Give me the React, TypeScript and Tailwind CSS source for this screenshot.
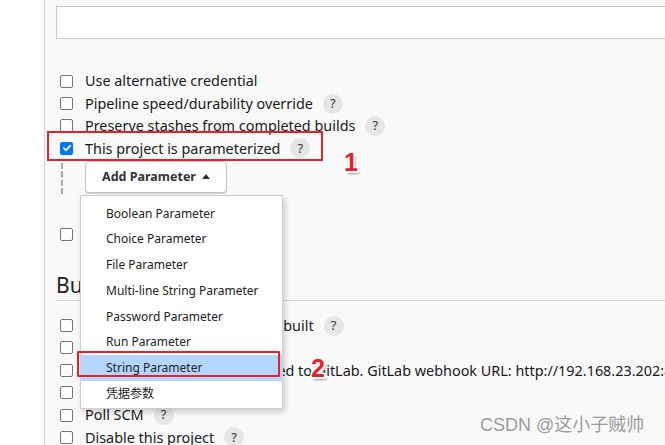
import React from "react";

const font = "font-['Segoe_UI','Noto_Sans',sans-serif]";

function Box({ checked }: { checked?: boolean }) {
  if (checked) {
    return (
      <span className="flex h-[13px] w-[13px] shrink-0 items-center justify-center rounded-[2px] bg-[#0075ff]">
        <svg width="10" height="10" viewBox="0 0 10 10">
          <path d="M1.8 5.2 4 7.3 8.3 2.6" fill="none" stroke="white" strokeWidth="1.8" strokeLinecap="round" strokeLinejoin="round" />
        </svg>
      </span>
    );
  }
  return <span className="h-[13px] w-[13px] shrink-0 rounded-[2px] border border-[#767676] bg-white" />;
}

function Help() {
  return (
    <span className="ml-[10px] flex h-[20px] w-[20px] shrink-0 items-center justify-center rounded-full bg-[#e6e6e6] text-[13px] text-[#333]">
      ?
    </span>
  );
}

function Row({ label, help, checked }: { label: string; help?: boolean; checked?: boolean }) {
  return (
    <div className="flex h-[22.4px] items-center whitespace-nowrap pl-[4px]">
      <Box checked={checked} />
      <span className="ml-[12px] text-[14.4px] text-[#1a1a1a]">{label}</span>
      {help && <Help />}
    </div>
  );
}

const params = [
  "Boolean Parameter",
  "Choice Parameter",
  "File Parameter",
  "Multi-line String Parameter",
  "Password Parameter",
  "Run Parameter",
  "String Parameter",
  "凭据参数",
];

const mark =
  "pointer-events-none absolute z-20 text-[25px] font-bold leading-none text-[#e8202a] font-['Liberation_Sans',sans-serif] [text-shadow:1.5px_1.5px_0_#fff,-1.5px_-1.5px_0_#fff,1.5px_-1.5px_0_#fff,-1.5px_1.5px_0_#fff,2px_3px_2px_#999]";

export default function App() {
  return (
    <div className={`relative flex h-[445px] w-[665px] overflow-hidden bg-white ${font}`}>
      <div className="w-[45px] shrink-0 border-r border-[#d4d4d4] bg-white" />
      <div className="min-w-0 flex-1 bg-[#f9f9f9] pl-[11px] pt-[6px]">
        <div className="h-[33px] w-[700px] border border-[#c8c8c8] bg-white" />

        <div className="mt-[31px]">
          <Row label="Use alternative credential" />
          <Row label="Pipeline speed/durability override" help />
          <Row label="Preserve stashes from completed builds" help />
          <Row label="This project is parameterized" help checked />
        </div>

        <div className="mt-[1.4px] flex h-[62px]">
          <div className="ml-[5px] mt-[2px] h-[31px] border-l-2 border-dashed border-[#a8a8a8]" />
          <div className="relative ml-[22px]">
            <button className="flex h-[32px] w-[142px] items-center justify-center gap-[6px] rounded-[4px] border border-[#c4c4c4] bg-white text-[12.5px] font-bold text-[#333] shadow-[0_1px_1px_rgba(0,0,0,0.15)]">
              Add Parameter
              <svg width="8" height="5" viewBox="0 0 8 5">
                <path d="M0 5 4 0 8 5Z" fill="#333" />
              </svg>
            </button>
            <div className="absolute left-[-5px] top-[34px] z-10 w-[203px] border border-[#cfcfcf] bg-white pb-[2px] pt-[5px] shadow-[2px_3px_6px_rgba(0,0,0,0.18)]">
              {params.map((p) => (
                <div
                  key={p}
                  className={`flex h-[25.7px] items-center whitespace-nowrap pl-[25px] text-[12px] text-[#222] font-['Segoe_UI','Noto_Sans','Noto_Sans_CJK_SC',sans-serif] ${
                    p === "String Parameter" ? "bg-[#b4d5fe]" : ""
                  }`}
                >
                  {p}
                </div>
              ))}
            </div>
          </div>
        </div>

        <Row label="Throttle builds" />

        <div className="mt-[26px] flex h-[30px] w-[700px] items-center border-b border-[#d6d6d6]">
          <span className="text-[21px] text-[#222]">Build Triggers</span>
        </div>

        <div className="mt-[13px]">
          <Row label="Build after other projects are built" help />
          <Row label="Build periodically" help />
          <Row label="Build when a change is pushed to GitLab. GitLab webhook URL: http://192.168.23.202:8080/project/demo" help />
          <Row label="GitHub hook trigger" help />
          <Row label="Poll SCM" help />
          <Row label="Disable this project" help />
        </div>
      </div>

      <div className="pointer-events-none absolute left-[47px] top-[131px] h-[30px] w-[276px] border-[2.5px] border-[#e8202a]" />
      <div className="pointer-events-none absolute left-[77px] top-[351px] z-20 h-[26px] w-[203px] rounded-[1px] border-[2.5px] border-[#e8202a]" />

      <span className={`${mark} left-[344px] top-[150px]`}>1</span>
      <span className={`${mark} left-[311px] top-[356px]`}>2</span>

      <span className="absolute left-[480px] top-[414px] text-[18px] leading-[22px] text-[#9a9a9a] [text-shadow:0_0_2px_#fff] font-['Liberation_Sans','Noto_Sans_CJK_SC',sans-serif]">
        CSDN @这小子贼帅
      </span>
    </div>
  );
}
